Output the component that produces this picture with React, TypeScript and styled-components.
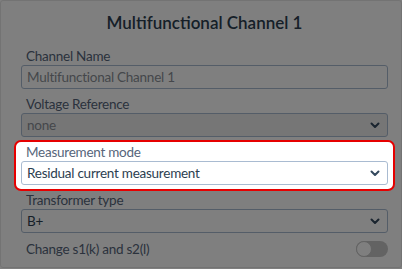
import React from "react";
import styled, { createGlobalStyle } from "styled-components";

const GlobalStyle = createGlobalStyle`
  html, body {
    margin: 0;
    padding: 0;
    background: #ffffff;
  }
  body {
    font-family: Lato, "Liberation Sans", sans-serif;
    width: 402px;
    height: 269px;
    overflow: hidden;
  }
`;

const Stage = styled.div`
  position: relative;
  width: 402px;
  height: 269px;
`;

const Dialog = styled.div`
  box-sizing: border-box;
  width: 402px;
  height: 268px;
  border: 1px solid #e6e6e6;
  border-radius: 3px;
  background: #ffffff;
  padding: 0 13px 0 20px;
`;

const Title = styled.h2`
  box-sizing: border-box;
  margin: 0;
  padding-top: 10px;
  height: 46px;
  line-height: 24px;
  text-align: center;
  font-size: 17px;
  font-weight: 600;
  color: #2c3e50;
`;

const Overlay = styled.div`
  position: absolute;
  inset: 0;
  background: rgba(0, 0, 0, 0.5);
  z-index: 1;
`;

const Group = styled.div<{ $last?: boolean }>`
  display: flex;
  flex-direction: column;
  margin-bottom: ${(p) => (p.$last ? "0" : "6px")};
`;

const Highlight = styled.div`
  position: relative;
  z-index: 2;
  background: #ffffff;
  border: 2px solid #e60000;
  border-radius: 7px;
  margin: -3px -7px 0;
  padding: 1px 5px 4px;
`;

const Label = styled.label`
  display: block;
  height: 18px;
  line-height: 18px;
  padding-left: 5px;
  font-size: 13.5px;
  letter-spacing: -0.25px;
  color: #56657a;
`;

const Field = styled.div<{ $disabled?: boolean; $filled?: boolean }>`
  box-sizing: border-box;
  display: flex;
  align-items: center;
  justify-content: space-between;
  height: 24px;
  padding: 0 7px 0 5px;
  border: 1px solid #a9bbd1;
  border-radius: 3px;
  background: ${(p) => (p.$filled ? "#ececec" : "#ffffff")};
  font-size: 13.5px;
  letter-spacing: -0.25px;
  color: ${(p) => (p.$disabled ? "#8a8f96" : "#2c3e50")};
`;

const Chevron = () => (
  <svg width="10" height="8" viewBox="0 0 10 8">
    <polyline points="1.5,2.5 5,6 8.5,2.5" fill="none" stroke="#34495e" strokeWidth="2" strokeLinecap="round" strokeLinejoin="round" />
  </svg>
);

const ToggleRow = styled.div`
  display: flex;
  align-items: center;
  justify-content: space-between;
  height: 20px;
`;

const Track = styled.div`
  position: relative;
  width: 32px;
  height: 16px;
  border-radius: 8px;
  background: #c6c6c6;
`;

const Knob = styled.div`
  position: absolute;
  left: 0;
  top: 0;
  box-sizing: border-box;
  width: 16px;
  height: 16px;
  border-radius: 50%;
  background: #ffffff;
  border: 1px solid #c6c6c6;
`;

export default function App() {
  return (
    <Stage>
      <GlobalStyle />
      <Dialog>
        <Title>Multifunctional Channel 1</Title>
        <Group>
          <Label>Channel Name</Label>
          <Field $disabled>Multifunctional Channel 1</Field>
        </Group>
        <Group>
          <Label>Voltage Reference</Label>
          <Field $disabled $filled>
            none
            <Chevron />
          </Field>
        </Group>
        <Highlight>
          <Group $last>
            <Label>Measurement mode</Label>
            <Field>
              Residual current measurement
              <Chevron />
            </Field>
          </Group>
        </Highlight>
        <Group>
          <Label>Transformer type</Label>
          <Field>
            B+
            <Chevron />
          </Field>
        </Group>
        <ToggleRow>
          <Label>Change s1(k) and s2(l)</Label>
          <Track>
            <Knob />
          </Track>
        </ToggleRow>
      </Dialog>
      <Overlay />
    </Stage>
  );
}
